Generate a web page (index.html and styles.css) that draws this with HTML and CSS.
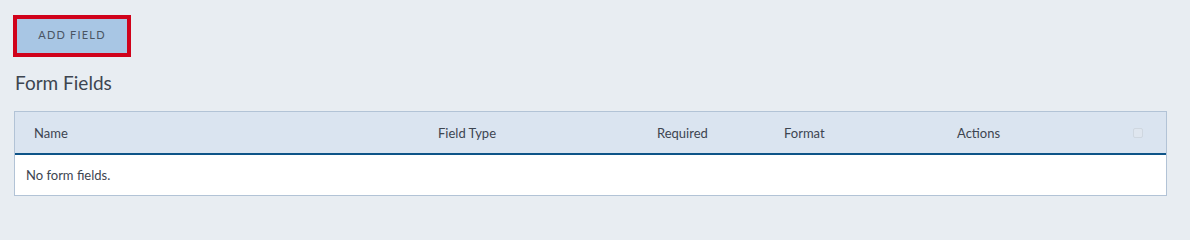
FILE: index.html
```html
<!DOCTYPE html>
<html>
<head>
<meta charset="utf-8">
<link rel="stylesheet" href="styles.css">
</head>
<body>
<div class="page">
  <div class="toolbar">
    <button class="add-btn">ADD FIELD</button>
  </div>
  <h2 class="title">Form Fields</h2>
  <div class="table">
    <div class="thead">
      <div class="th">Name</div>
      <div class="th">Field Type</div>
      <div class="th">Required</div>
      <div class="th">Format</div>
      <div class="th">Actions</div>
      <div class="th chk-cell"><span class="chk"></span></div>
    </div>
    <div class="tbody">
      <div class="empty">No form fields.</div>
    </div>
  </div>
</div>
</body>
</html>
```
FILE: styles.css
```css
html, body {
  margin: 0;
  padding: 0;
  background: #e8edf2;
}
body {
  font-family: Lato, "Noto Sans", sans-serif;
  color: #3d4550;
}
.page {
  padding: 19px 23px 0 14px;
}
.toolbar {
  display: flex;
  padding-left: 3px;
}
.add-btn {
  width: 110px;
  height: 34px;
  background: #a8c6e4;
  border: none;
  outline: 4px solid #d0021b;
  font-family: Lato, "Noto Sans", sans-serif;
  font-size: 11px;
  letter-spacing: 1.2px;
  color: #4a5563;
  padding: 0 0 4px 0;
}
.title {
  margin: 16px 0 0 1px;
  font-size: 19px;
  font-weight: 400;
  line-height: 28px;
  color: #3d4550;
}
.table {
  margin-top: 14px;
  border: 1px solid #b2c3d6;
  background: #fff;
}
.thead {
  display: grid;
  grid-template-columns: 404px 219px 127px 173px 176px 10px;
  align-items: center;
  height: 41px;
  padding-left: 19px;
  background: #dae4f0;
  border-bottom: 2px solid #0e5488;
}
.th {
  font-size: 13px;
  color: #3d4550;
}
.chk-cell {
  display: flex;
}
.chk {
  width: 8px;
  height: 8px;
  border: 1px solid #cfd7e0;
  border-radius: 2px;
  background: #dfe6ef;
}
.tbody {
  height: 40px;
  display: flex;
  align-items: center;
  padding-left: 11px;
}
.empty {
  font-size: 13px;
  color: #3d4550;
}
```
